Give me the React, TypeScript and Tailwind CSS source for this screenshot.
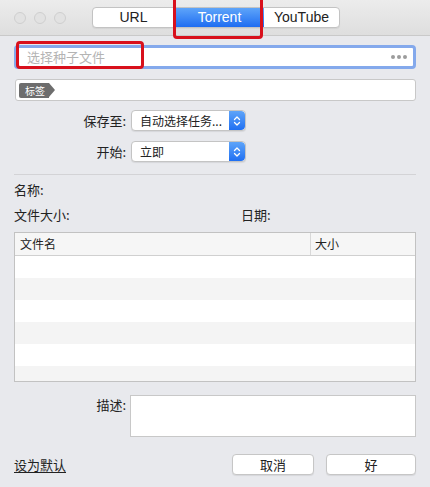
import React from "react";

const font = { fontFamily: '"Noto Sans CJK SC", "Liberation Sans", sans-serif' };
const latin = { fontFamily: '"Liberation Sans", sans-serif' };

const Stepper = () => (
  <div className="w-[16px] h-full rounded-r-[4px] bg-gradient-to-b from-[#5ea4f9] to-[#1f6ff2] flex items-center justify-center">
    <svg width="8" height="12" viewBox="0 0 8 12" fill="none" stroke="white" strokeWidth="1.3" strokeLinecap="round" strokeLinejoin="round">
      <path d="M1.5 4.5 L4 2 L6.5 4.5" />
      <path d="M1.5 7.5 L4 10 L6.5 7.5" />
    </svg>
  </div>
);

const Popup = ({ text }: { text: string }) => (
  <div className="w-[115px] h-[21px] flex bg-white border border-[#c4c4c4] rounded-[4px] shadow-[0_1px_1px_rgba(0,0,0,0.08)] overflow-hidden">
    <span className="flex-1 pl-[8px] text-[12px] leading-[19px] text-[#222]">{text}</span>
    <Stepper />
  </div>
);

const App = () => {
  return (
    <div className="relative w-[430px] h-[487px] bg-[#e8e9ed] overflow-hidden text-[#222]" style={font}>
      {/* title bar */}
      <div className="h-[36px] bg-gradient-to-b from-[#ececec] to-[#dedede] border-b border-[#c9c9c9] flex items-center">
        <div className="flex gap-[8px] pl-[14px]">
          <span className="w-[12px] h-[12px] rounded-full border border-[#cfcfcf] bg-[#e2e2e2]" />
          <span className="w-[12px] h-[12px] rounded-full border border-[#cfcfcf] bg-[#e2e2e2]" />
          <span className="w-[12px] h-[12px] rounded-full border border-[#cfcfcf] bg-[#e2e2e2]" />
        </div>
        <div className="ml-[26px] flex h-[21px] rounded-[4px] border border-[#c3c3c3] bg-white overflow-hidden text-[14px] shadow-[0_1px_1px_rgba(0,0,0,0.06)]" style={latin}>
          <div className="w-[82px] flex items-center justify-center border-r border-[#c8c8c8]">URL</div>
          <div className="w-[89px] flex items-center justify-center bg-gradient-to-b from-[#5ea4f9] to-[#1e6cf1] text-white">Torrent</div>
          <div className="w-[75px] flex items-center justify-center">YouTube</div>
        </div>
      </div>

      <div className="px-[14px]">
        {/* torrent file input */}
        <div className="mt-[9px] h-[24px] rounded-[4px] border-[3px] border-[#84a9ec] bg-white flex items-center pl-[10px] pr-[6px]">
          <span className="flex-1 text-[13px] text-[#b4b4b4]">选择种子文件</span>
          <span className="flex gap-[2px]">
            <span className="w-[4px] h-[4px] rounded-full bg-[#9c9c9c]" />
            <span className="w-[4px] h-[4px] rounded-full bg-[#9c9c9c]" />
            <span className="w-[4px] h-[4px] rounded-full bg-[#9c9c9c]" />
          </span>
        </div>

        {/* tag field */}
        <div className="mt-[10px] h-[22px] ml-[1px] rounded-[3px] border border-[#c8c8c8] bg-white flex items-center px-[3px]">
          <div className="flex items-center h-[15px]">
            <span className="h-[15px] bg-[#6d6d6d] text-white text-[10px] leading-[15px] pl-[6px] pr-[4px] rounded-l-[2px]">标签</span>
            <span className="w-0 h-0 border-y-[7.5px] border-y-transparent border-l-[6px] border-l-[#6d6d6d]" />
          </div>
        </div>

        {/* save to */}
        <div className="mt-[9px] flex items-center">
          <span className="w-[117px] text-right pr-[5px] text-[13px]">保存至:</span>
          <Popup text="自动选择任务..." />
        </div>
        <div className="mt-[10px] flex items-center">
          <span className="w-[117px] text-right pr-[5px] text-[13px]">开始:</span>
          <Popup text="立即" />
        </div>

        <div className="mt-[12px] h-px bg-[#d3d3d6]" />

        <div className="mt-[6px] h-[18px] text-[13px] leading-[18px]">名称:</div>
        <div className="mt-[7px] h-[18px] text-[13px] leading-[18px] flex">
          <span className="w-[227px]">文件大小:</span>
          <span>日期:</span>
        </div>

        {/* file table */}
        <div className="mt-[8px] h-[150px] border border-[#c2c2c2] bg-white flex flex-col overflow-hidden">
          <div className="h-[23px] flex bg-[#f6f6f6] border-b border-[#d0d0d0] text-[12px] leading-[22px]">
            <span className="w-[296px] pl-[5px] border-r border-[#d8d8d8]">文件名</span>
            <span className="pl-[4px]">大小</span>
          </div>
          <div className="h-[22px] bg-white" />
          <div className="h-[22px] bg-[#f4f4f4]" />
          <div className="h-[22px] bg-white" />
          <div className="h-[22px] bg-[#f4f4f4]" />
          <div className="h-[22px] bg-white" />
          <div className="flex-1 bg-[#f4f4f4]" />
        </div>

        {/* description */}
        <div className="mt-[13px] flex">
          <span className="w-[116px] text-right pr-[4px] text-[13px] leading-[18px] pt-[1px]">描述:</span>
          <div className="flex-1 h-[42px] bg-white border border-[#c8c8c8]" />
        </div>

        {/* footer */}
        <div className="mt-[17px] flex items-center">
          <span className="flex-1 text-[13px] underline underline-offset-2">设为默认</span>
          <button className="w-[82px] h-[21px] bg-white border border-[#c6c6c6] rounded-[4px] text-[13px] leading-[19px] shadow-[0_1px_1px_rgba(0,0,0,0.08)]">取消</button>
          <button className="ml-[12px] w-[90px] h-[21px] bg-white border border-[#c6c6c6] rounded-[4px] text-[13px] leading-[19px] shadow-[0_1px_1px_rgba(0,0,0,0.08)]">好</button>
        </div>
      </div>

      {/* red highlight annotations */}
      <div className="absolute left-[173px] top-[-6px] w-[90px] h-[45px] border-[3px] border-[#d8101c] rounded-[4px] pointer-events-none" />
      <div className="absolute left-[16px] top-[41px] w-[128px] h-[28px] border-[3px] border-[#d8101c] rounded-[4px] pointer-events-none" />
    </div>
  );
};

export default App;
